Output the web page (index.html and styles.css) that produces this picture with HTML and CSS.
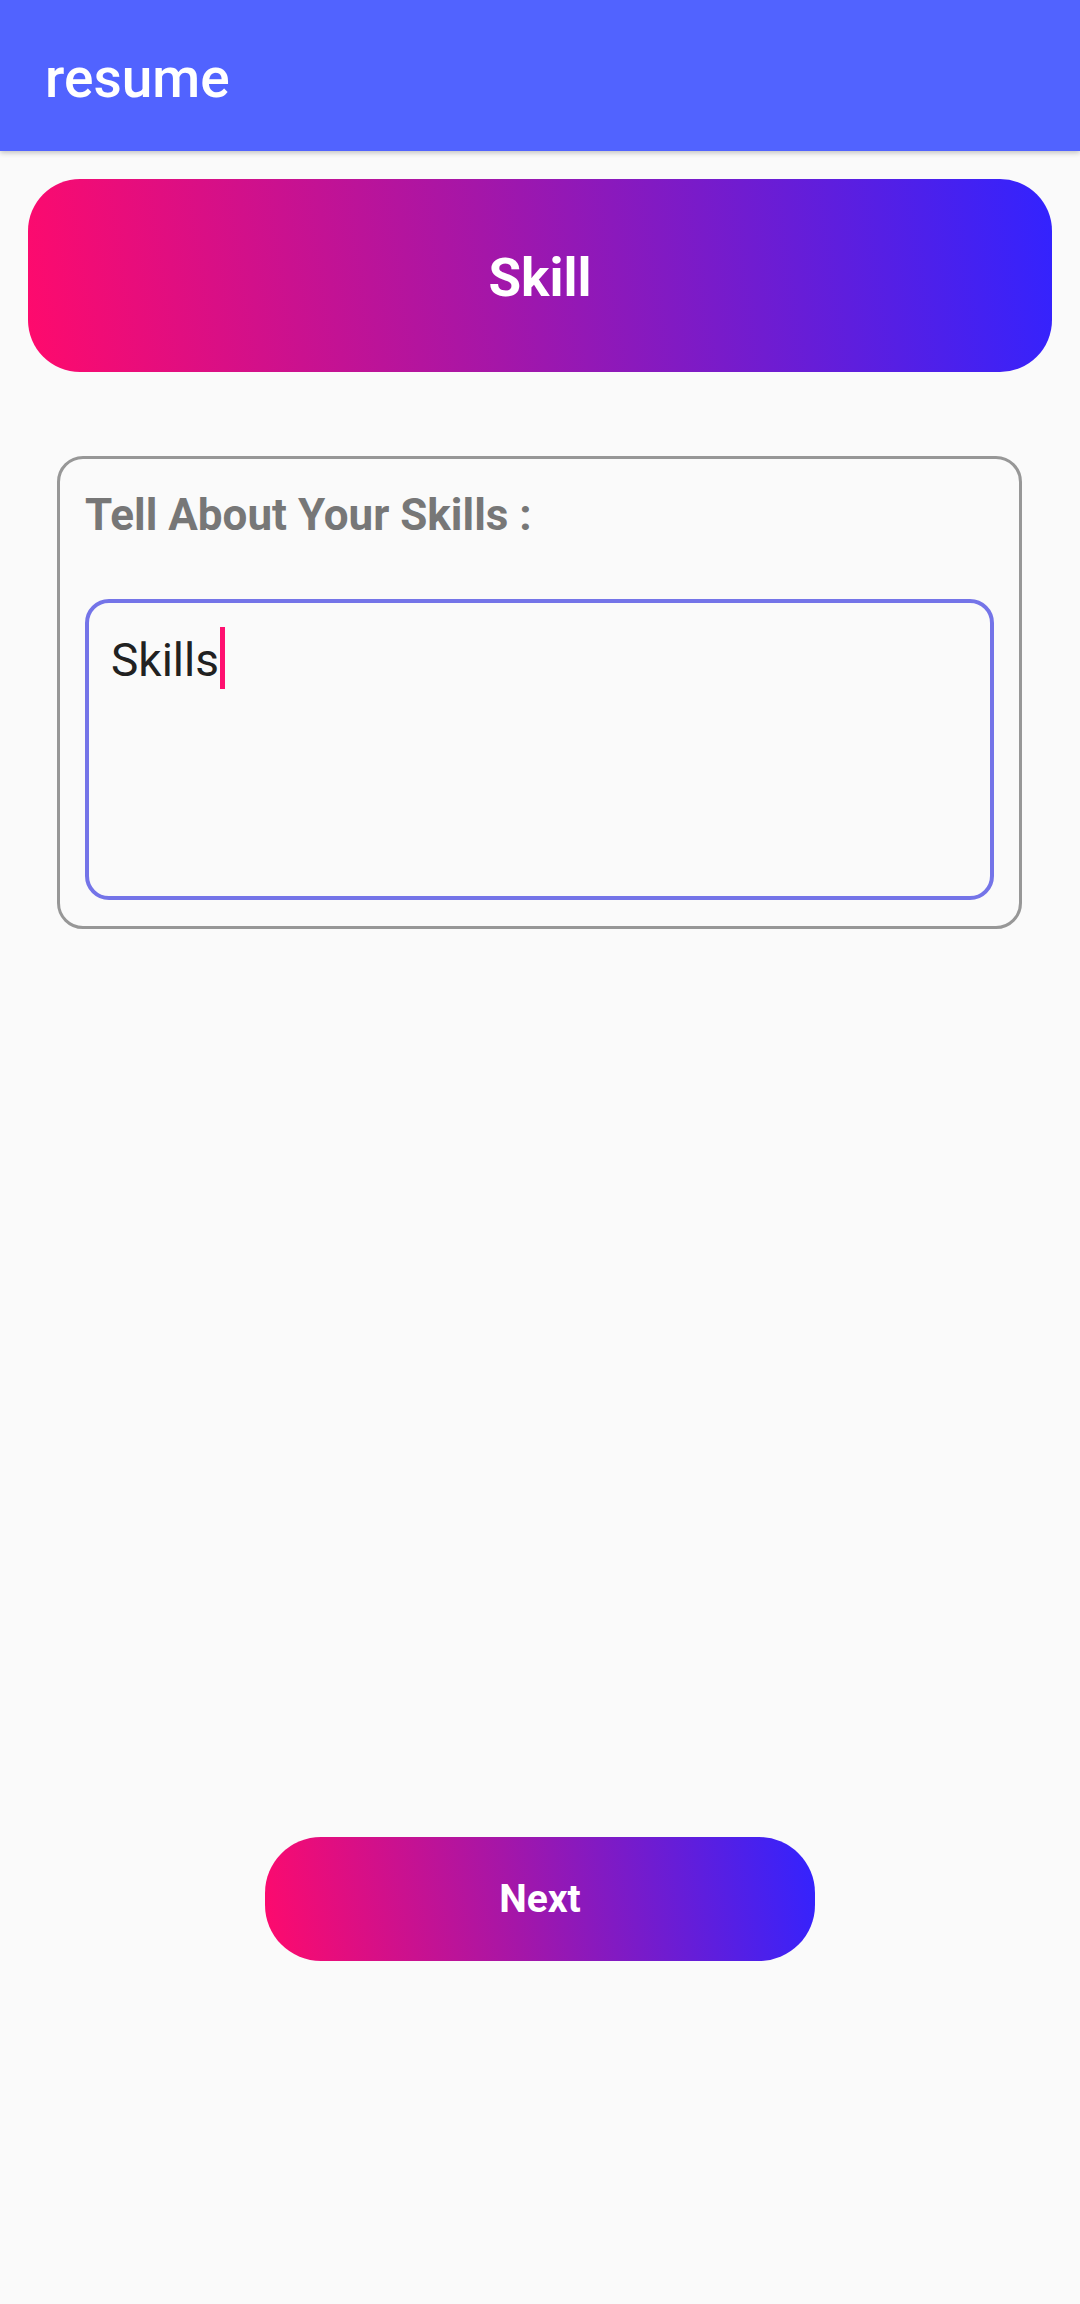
FILE: index.html
```html
<!DOCTYPE html>
<html lang="en">
<head>
<meta charset="utf-8">
<title>resume</title>
<link rel="stylesheet" href="styles.css">
</head>
<body>
<header class="appbar"><span class="appbar-title">resume</span></header>
<main class="content">
  <div class="banner">Skill</div>
  <section class="card">
    <div class="card-label">Tell About Your Skills :</div>
    <div class="field"><span class="field-text">Skills</span><span class="caret"></span></div>
  </section>
  <button class="next-btn" type="button">Next</button>
</main>
</body>
</html>
```
FILE: styles.css
```css
html, body {
  margin: 0;
  padding: 0;
}
body {
  width: 1080px;
  min-height: 2304px;
  background: #fafafa;
  font-family: Roboto, "Noto Sans", "Liberation Sans", sans-serif;
}
.appbar {
  box-sizing: border-box;
  height: 151px;
  padding: 46px 0 0 45px;
  background: #5163ff;
  box-shadow: 0 2px 5px rgba(0, 0, 0, 0.22);
  position: relative;
  z-index: 1;
}
.appbar-title {
  display: block;
  color: #ffffff;
  font-size: 55px;
  font-weight: 500;
  line-height: 64px;
}
.content {
  display: flex;
  flex-direction: column;
  align-items: stretch;
  padding: 28px 0 0 0;
}
.banner {
  margin: 0 28px;
  height: 193px;
  border-radius: 52px;
  background: linear-gradient(82deg, #ff0a6c 0%, #a516a8 45%, #3223ff 100%);
  color: #ffffff;
  font-size: 53px;
  font-weight: 700;
  display: flex;
  align-items: center;
  justify-content: center;
  padding-top: 5px;
  box-sizing: border-box;
}
.card {
  margin: 84px 58px 0 57px;
  border: 3px solid #979797;
  border-radius: 26px;
  padding: 30px 25px 26px 25px;
}
.card-label {
  color: #777777;
  font-size: 44px;
  font-weight: 700;
  line-height: 52px;
}
.field {
  margin-top: 58px;
  height: 301px;
  box-sizing: border-box;
  border: 4px solid #7474e8;
  border-radius: 24px;
  padding: 24px 22px 0 22px;
  font-size: 46px;
  line-height: 54px;
  color: #212121;
}
.caret {
  display: inline-block;
  width: 5px;
  height: 62px;
  margin-left: 1px;
  background: #ff1070;
  vertical-align: -13px;
}
.next-btn {
  align-self: center;
  margin-top: 908px;
  width: 550px;
  height: 124px;
  border: none;
  border-radius: 56px;
  background: linear-gradient(80deg, #ff0a6c 0%, #a516a8 45%, #3223ff 100%);
  color: #ffffff;
  font-family: Roboto, "Noto Sans", "Liberation Sans", sans-serif;
  font-size: 39px;
  font-weight: 700;
  padding: 0;
}
```
